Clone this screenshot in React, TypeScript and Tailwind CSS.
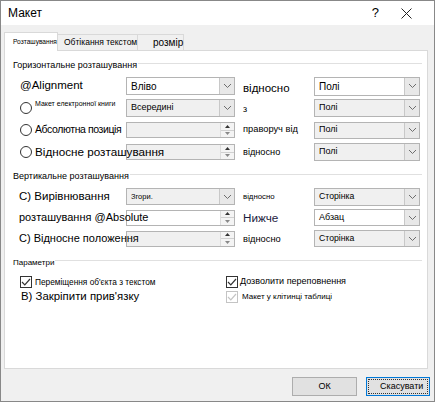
import React from "react";

const Chevron = () => (
  <svg width="9" height="6" viewBox="0 0 9 6">
    <path d="M1 1 L4.5 4.5 L8 1" fill="none" stroke="#6d6d6d" strokeWidth="1" />
  </svg>
);

function Dropdown({ w, h, bg, text, tc }: { w: string; h: string; bg: string; text: string; tc: string }) {
  return (
    <div className={`flex ${w} ${h} ${bg} border border-[#b4b4b4] shrink-0`}>
      <div className={`flex-1 flex items-center pl-[4px] overflow-hidden whitespace-nowrap ${tc}`}>{text}</div>
      <div className="w-[15px] flex items-center justify-center bg-[#e8e8e8] border-l border-[#c8c8c8]">
        <Chevron />
      </div>
    </div>
  );
}

function Spinner({ bg, text, tc }: { bg: string; text?: string; tc?: string }) {
  return (
    <div className={`flex w-[109px] h-[16px] ${bg} border border-[#b4b4b4] shrink-0`}>
      <div className={`flex-1 flex items-center pl-[4px] overflow-hidden whitespace-nowrap ${tc ?? ""}`}>{text}</div>
      <div className="w-[14px] flex flex-col border-l border-[#dcdcdc] bg-[#f4f4f4]">
        <div className="flex-1 flex items-center justify-center border-b border-[#d0d0d0]">
          <svg width="5" height="3" viewBox="0 0 5 3"><path d="M0 3 L2.5 0 L5 3Z" fill="#333" /></svg>
        </div>
        <div className="flex-1 flex items-center justify-center">
          <svg width="5" height="3" viewBox="0 0 5 3"><path d="M0 0 L2.5 3 L5 0Z" fill="#888" /></svg>
        </div>
      </div>
    </div>
  );
}

const Radio = () => (
  <div className="w-[12px] h-[12px] rounded-full border border-[#333] bg-white shrink-0" />
);

const Check = ({ disabled }: { disabled?: boolean }) => (
  <div
    className={`w-[12px] h-[12px] border ${disabled ? "border-[#c4c4c4]" : "border-[#333]"} bg-white shrink-0 flex items-center justify-center`}
  >
    <svg width="10" height="8" viewBox="0 0 10 8">
      <path d="M1 4 L3.8 6.8 L9 1" fill="none" stroke={disabled ? "#c4c4c4" : "#333"} strokeWidth="1.2" />
    </svg>
  </div>
);

function Header({ text, tc }: { text: string; tc: string }) {
  return (
    <div className="flex items-center h-[12px] pl-[8px] pr-[5px]">
      <span className={`whitespace-nowrap ${tc}`}>{text}</span>
      <div className="flex-1 h-px bg-[#e0e0e0] ml-[1px] mb-[5px]" />
    </div>
  );
}

export default function App() {
  return (
    <div
      className="w-[435px] h-[402px] border border-[#888] bg-[#f0f0f0] flex flex-col text-black"
      style={{ fontFamily: '"Liberation Sans", Arial, sans-serif' }}
    >
      {/* title bar */}
      <div className="h-[24px] bg-white flex items-center pl-[7px] shrink-0">
        <span className="text-[12px]">Макет</span>
        <div className="flex-1" />
        <span className="text-[13px] mr-[22px]">?</span>
        <svg width="11" height="11" viewBox="0 0 11 11" className="mr-[22px]">
          <path d="M0.5 0.5 L10.5 10.5 M10.5 0.5 L0.5 10.5" stroke="#222" strokeWidth="1" />
        </svg>
      </div>

      <div className="flex-1 flex flex-col pl-[3px] pr-[5px] pt-[7px]">
        {/* tabs */}
        <div className="flex items-end h-[18px] relative z-10">
          <div className="w-[54px] h-[19px] -mb-px bg-white border border-b-0 border-[#d9d9d9] flex items-center pl-[8px] text-[6.6px] whitespace-nowrap overflow-visible">
            Розташування
          </div>
          <div className="w-[80px] h-[16px] bg-[#f0f0f0] border border-b-0 border-l-0 border-[#d9d9d9] flex items-center pl-[6px] text-[8.5px] whitespace-nowrap">
            Обтікання текстом
          </div>
          <div className="w-[46px] h-[16px] bg-[#f0f0f0] border border-b-0 border-l-0 border-[#d9d9d9] flex items-end pl-[15px] text-[10px] leading-[14px] whitespace-nowrap">
            розмір
          </div>
        </div>

        {/* panel */}
        <div className="w-[424px] h-[319px] bg-white border border-[#d9d9d9] flex flex-col pt-[9px]">
          <Header text="Горизонтальне розташування" tc="text-[9px]" />
          <div className="flex flex-col mt-[3px] pl-[15px]">
            <div className="flex items-center h-[22px]">
              <div className="w-[106px] relative z-10 whitespace-nowrap text-[11.5px]">@Alignment</div>
              <Dropdown w="w-[109px]" h="h-[18px]" bg="bg-white" text="Вліво" tc="text-[10px]" />
              <div className="w-[79px] pl-[8px] relative z-10 whitespace-nowrap text-[11.5px] pt-[6px]">відносно</div>
              <Dropdown w="w-[106px]" h="h-[19px]" bg="bg-white" text="Полі" tc="text-[10px]" />
            </div>
            <div className="flex items-center h-[22px]">
              <div className="w-[106px] relative z-10 flex items-center">
                <Radio />
                <span className="ml-[3px] text-[7px] whitespace-nowrap self-start -mt-[3px]">Макет електронної книги</span>
              </div>
              <Dropdown w="w-[109px]" h="h-[18px]" bg="bg-[#f0f0f0]" text="Всередині" tc="text-[9px]" />
              <div className="w-[79px] pl-[8px] relative z-10 whitespace-nowrap text-[9px] pt-[3px]">з</div>
              <Dropdown w="w-[106px]" h="h-[18px]" bg="bg-[#f0f0f0]" text="Полі" tc="text-[9px]" />
            </div>
            <div className="flex items-center h-[22px]">
              <div className="w-[106px] relative z-10 flex items-center">
                <Radio />
                <span className="ml-[3px] text-[10.5px] tracking-[-0.4px] whitespace-nowrap">Абсолютна позиція</span>
              </div>
              <Spinner bg="bg-[#f0f0f0]" />
              <div className="w-[79px] pl-[8px] relative z-10 whitespace-nowrap text-[9.3px]">праворуч від</div>
              <Dropdown w="w-[106px]" h="h-[17px]" bg="bg-[#f0f0f0]" text="Полі" tc="text-[9px]" />
            </div>
            <div className="flex items-center h-[22px]">
              <div className="w-[106px] relative z-10 flex items-center">
                <Radio />
                <span className="ml-[3px] text-[11.7px] whitespace-nowrap">Відносне розташування</span>
              </div>
              <Spinner bg="bg-[#f0f0f0]" />
              <div className="w-[79px] pl-[8px] relative z-10 whitespace-nowrap text-[9.2px] pt-[2px]">відносно</div>
              <Dropdown w="w-[106px]" h="h-[18px]" bg="bg-[#f0f0f0]" text="Полі" tc="text-[9px]" />
            </div>
          </div>

          <div className="mt-[8px]">
            <Header text="Вертикальне розташування" tc="text-[9px]" />
          </div>
          <div className="flex flex-col mt-[3px] pl-[14px]">
            <div className="flex items-center h-[21px]">
              <div className="w-[107px] relative z-10 whitespace-nowrap text-[11.5px]">С) Вирівнювання</div>
              <Dropdown w="w-[109px]" h="h-[17px]" bg="bg-[#f0f0f0]" text="Згори." tc="text-[7.5px]" />
              <div className="w-[79px] pl-[8px] relative z-10 whitespace-nowrap text-[7.8px]">відносно</div>
              <Dropdown w="w-[106px]" h="h-[18px]" bg="bg-[#f0f0f0]" text="Сторінка" tc="text-[8.7px]" />
            </div>
            <div className="flex items-center h-[21px]">
              <div className="w-[107px] relative z-10 whitespace-nowrap text-[11px]">розташування @Absolute</div>
              <Spinner bg="bg-white" />
              <div className="w-[79px] pl-[8px] relative z-10 whitespace-nowrap text-[11.7px] text-[#1c1c40]">Нижче</div>
              <Dropdown w="w-[106px]" h="h-[17px]" bg="bg-white" text="Абзац" tc="text-[9px]" />
            </div>
            <div className="flex items-center h-[21px]">
              <div className="w-[107px] relative z-10 whitespace-nowrap text-[11px]">С) Відносне положення</div>
              <Spinner bg="bg-[#f0f0f0]" />
              <div className="w-[79px] pl-[8px] relative z-10 whitespace-nowrap text-[9.3px] pt-[3px]">відносно</div>
              <Dropdown w="w-[106px]" h="h-[17px]" bg="bg-[#f0f0f0]" text="Сторінка" tc="text-[8.7px]" />
            </div>
          </div>

          <div className="mt-[8px]">
            <Header text="Параметри" tc="text-[8px]" />
          </div>
          <div className="flex mt-[5px]">
            <div className="w-[221px] pl-[15px] flex flex-col">
              <div className="flex items-center h-[16px]">
                <Check />
                <span className="ml-[3px] text-[8.3px] whitespace-nowrap">Переміщення об'єкта з текстом</span>
              </div>
              <div className="flex items-center h-[14px] pl-[1px] text-[11.4px] whitespace-nowrap">В) Закріпити прив'язку</div>
            </div>
            <div className="flex flex-col">
              <div className="flex items-center h-[16px]">
                <Check />
                <span className="ml-[2px] text-[9px] whitespace-nowrap">Дозволити переповнення</span>
              </div>
              <div className="flex items-center h-[14px]">
                <Check disabled />
                <span className="ml-[4px] text-[8px] whitespace-nowrap">Макет у клітинці таблиці</span>
              </div>
            </div>
          </div>
        </div>

        {/* buttons */}
        <div className="flex justify-end mt-[8px] gap-[9px]">
          <div className="w-[65px] h-[19px] bg-[#e1e1e1] border border-[#adadad] flex items-center justify-center text-[9px]">
            ОК
          </div>
          <div className="w-[64px] h-[19px] bg-[#e1e1e1] border border-[#0078d7] -mr-[1px] p-[1px]">
            <div className="w-full h-full border border-dotted border-[#333] overflow-hidden flex items-center pl-[11px] text-[9px] whitespace-nowrap">
              Скасувати
            </div>
          </div>
        </div>
      </div>
    </div>
  );
}
